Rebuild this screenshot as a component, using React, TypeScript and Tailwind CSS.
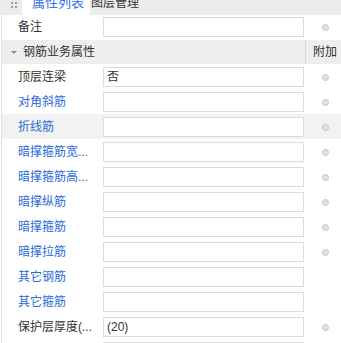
import React from "react";

type Row = { label: string; blue?: boolean; value?: string; dot?: boolean; gray?: boolean };

const rows: Row[] = [
  { label: "顶层连梁", value: "否", dot: true },
  { label: "对角斜筋", blue: true, dot: true },
  { label: "折线筋", blue: true, dot: true, gray: true },
  { label: "暗撑箍筋宽...", blue: true, dot: true },
  { label: "暗撑箍筋高...", blue: true, dot: true },
  { label: "暗撑纵筋", blue: true, dot: true },
  { label: "暗撑箍筋", blue: true, dot: true },
  { label: "暗撑拉筋", blue: true, dot: true },
  { label: "其它钢筋", blue: true },
  { label: "其它箍筋", blue: true },
  { label: "保护层厚度(...", value: "(20)", dot: true },
  { label: "", dot: false },
];

function Dot() {
  return <div className="w-[7px] h-[7px] rounded-full bg-[#e2e2e2] border border-[#c4c4c4]" />;
}

function PropRow({ r, pt = "pt-[3px]" }: { r: Row; pt?: string }) {
  return (
    <div className={`flex h-[25px] ${pt} ${r.gray ? "bg-[#f2f2f2]" : "bg-white"}`}>
      <div
        className={`w-[101px] pl-[16px] h-[20px] leading-[20px] text-[12px] whitespace-nowrap overflow-hidden ${
          r.blue ? "text-[#2a6ad8]" : "text-[#333333]"
        }`}
      >
        {r.label}
      </div>
      <div className="w-[201px] h-[20px] border border-[#dcdcdc] bg-white pl-[3px] leading-[18px] text-[12px] text-[#333333]">
        {r.value}
      </div>
      <div className="pl-[18px] h-[20px] flex items-center">{r.dot ? <Dot /> : null}</div>
    </div>
  );
}

export default function App() {
  return (
    <div
      className="w-[341px] h-[343px] overflow-hidden bg-white"
      style={{ fontFamily: '"Liberation Sans", "Noto Sans CJK SC", sans-serif' }}
    >
      <div className="h-[15px] bg-[#ececec] flex overflow-hidden">
        <div className="w-[22px] relative">
          <div className="absolute left-[11px] top-[2px] grid grid-cols-2 gap-x-[2px] gap-y-[2px]">
            <div className="w-[2px] h-[2px] bg-[#9a9a9a]" />
            <div className="w-[2px] h-[2px] bg-[#9a9a9a]" />
            <div className="w-[2px] h-[2px] bg-[#9a9a9a]" />
            <div className="w-[2px] h-[2px] bg-[#9a9a9a]" />
          </div>
        </div>
        <div className="w-[68px] h-[21px] mt-[-6px] bg-white pl-[10px] text-[13px] leading-[18px] text-[#2f74e6] whitespace-nowrap">
          属性列表
        </div>
        <div className="h-[21px] mt-[-6px] pl-[1px] text-[12px] leading-[18px] text-[#333333] whitespace-nowrap">
          图层管理
        </div>
      </div>
      <div className="border-l border-[#e2e2e2] ml-[1px]">
        <PropRow r={{ label: "备注", dot: true }} pt="pt-[2px]" />
        <div className="flex h-[24px] bg-[#eeeeee] text-[12px] text-[#333333]">
          <div className="w-[303px] flex items-center">
            <div className="ml-[9px] w-0 h-0 border-l-[3px] border-r-[3px] border-t-[3px] border-l-transparent border-r-transparent border-t-[#8a8a8a]" />
            <div className="ml-[6px] leading-[24px]">钢筋业务属性</div>
          </div>
          <div className="border-l border-[#dadada] pl-[7px] leading-[24px] whitespace-nowrap">附加</div>
        </div>
        {rows.map((r, i) => (
          <PropRow key={i} r={r} />
        ))}
      </div>
    </div>
  );
}
